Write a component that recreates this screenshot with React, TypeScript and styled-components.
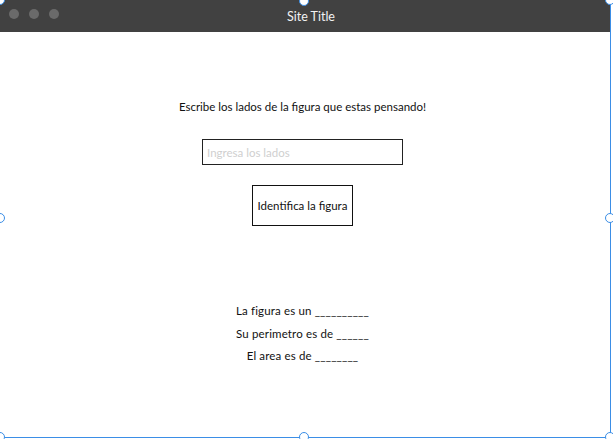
import React from "react";
import styled, { createGlobalStyle } from "styled-components";

const Global = createGlobalStyle`
  html, body { margin: 0; padding: 0; background: #ffffff; }
  body { font-family: Lato, "Liberation Sans", sans-serif; }
`;

const Stage = styled.div`
  position: relative;
  width: 613px;
  height: 439px;
  overflow: hidden;
  background: #fff;
`;

const Frame = styled.div`
  width: 610px;
  height: 437px;
  border-right: 1px solid #3b8ee6;
  border-bottom: 1px solid #3b8ee6;
  display: flex;
  flex-direction: column;
`;

const TitleBar = styled.div`
  box-sizing: border-box;
  height: 32px;
  background: #414141;
  display: flex;
  align-items: flex-start;
  position: relative;
  padding: 9px 0 0 9px;
  gap: 10px;
`;

const Dot = styled.span`
  width: 10px;
  height: 10px;
  border-radius: 50%;
  background: #6a6a6a;
`;

const Title = styled.div`
  position: absolute;
  left: 0;
  right: 0;
  top: 0;
  bottom: 0;
  display: flex;
  align-items: center;
  justify-content: center;
  color: #f2f2f2;
  font-size: 12.5px;
  padding-left: 12px;
`;

const Body = styled.main`
  width: 605px;
  display: flex;
  flex-direction: column;
  align-items: center;
  color: #111;
  font-size: 11.5px;
`;

const Prompt = styled.p`
  margin: 67px 0 0;
  line-height: 15px;
`;

const Field = styled.input`
  margin-top: 25px;
  box-sizing: border-box;
  width: 201px;
  height: 26px;
  border: 1px solid #222;
  padding: 0 0 0 4px;
  font: inherit;
  font-size: 11.5px;
  outline: none;
  &::placeholder { color: #cfcfcf; }
`;

const Action = styled.button`
  margin-top: 20px;
  box-sizing: border-box;
  width: 101px;
  height: 41px;
  border: 1px solid #111;
  background: #fff;
  font: inherit;
  font-size: 11.5px;
  color: #111;
  padding: 0;
`;

const Results = styled.div`
  margin-top: 77px;
  display: flex;
  flex-direction: column;
  align-items: center;
  gap: 7.5px;
  line-height: 15px;
`;

const Line = styled.span`
  letter-spacing: 0.15px;
`;

const Handle = styled.span<{ $x: number; $y: number }>`
  position: absolute;
  left: ${(p) => p.$x - 5}px;
  top: ${(p) => p.$y - 5}px;
  width: 8px;
  height: 8px;
  border-radius: 50%;
  background: #fff;
  border: 1px solid #3b8ee6;
`;

export default function App() {
  const handles = [
    [0, 0], [304, 1], [610, 0],
    [0, 218], [610, 218],
    [0, 437], [304, 437], [610, 437],
  ];
  return (
    <>
      <Global />
      <Stage>
        <Frame>
          <TitleBar>
            <Dot />
            <Dot />
            <Dot />
            <Title>Site Title</Title>
          </TitleBar>
          <Body>
            <Prompt>Escribe los lados de la figura que estas pensando!</Prompt>
            <Field placeholder="Ingresa los lados" />
            <Action>Identifica la figura</Action>
            <Results>
              <Line>La figura es un __________</Line>
              <Line>Su perimetro es de ______</Line>
              <Line>El area es de ________</Line>
            </Results>
          </Body>
        </Frame>
        {handles.map(([x, y], i) => (
          <Handle key={i} $x={x} $y={y} />
        ))}
      </Stage>
    </>
  );
}
